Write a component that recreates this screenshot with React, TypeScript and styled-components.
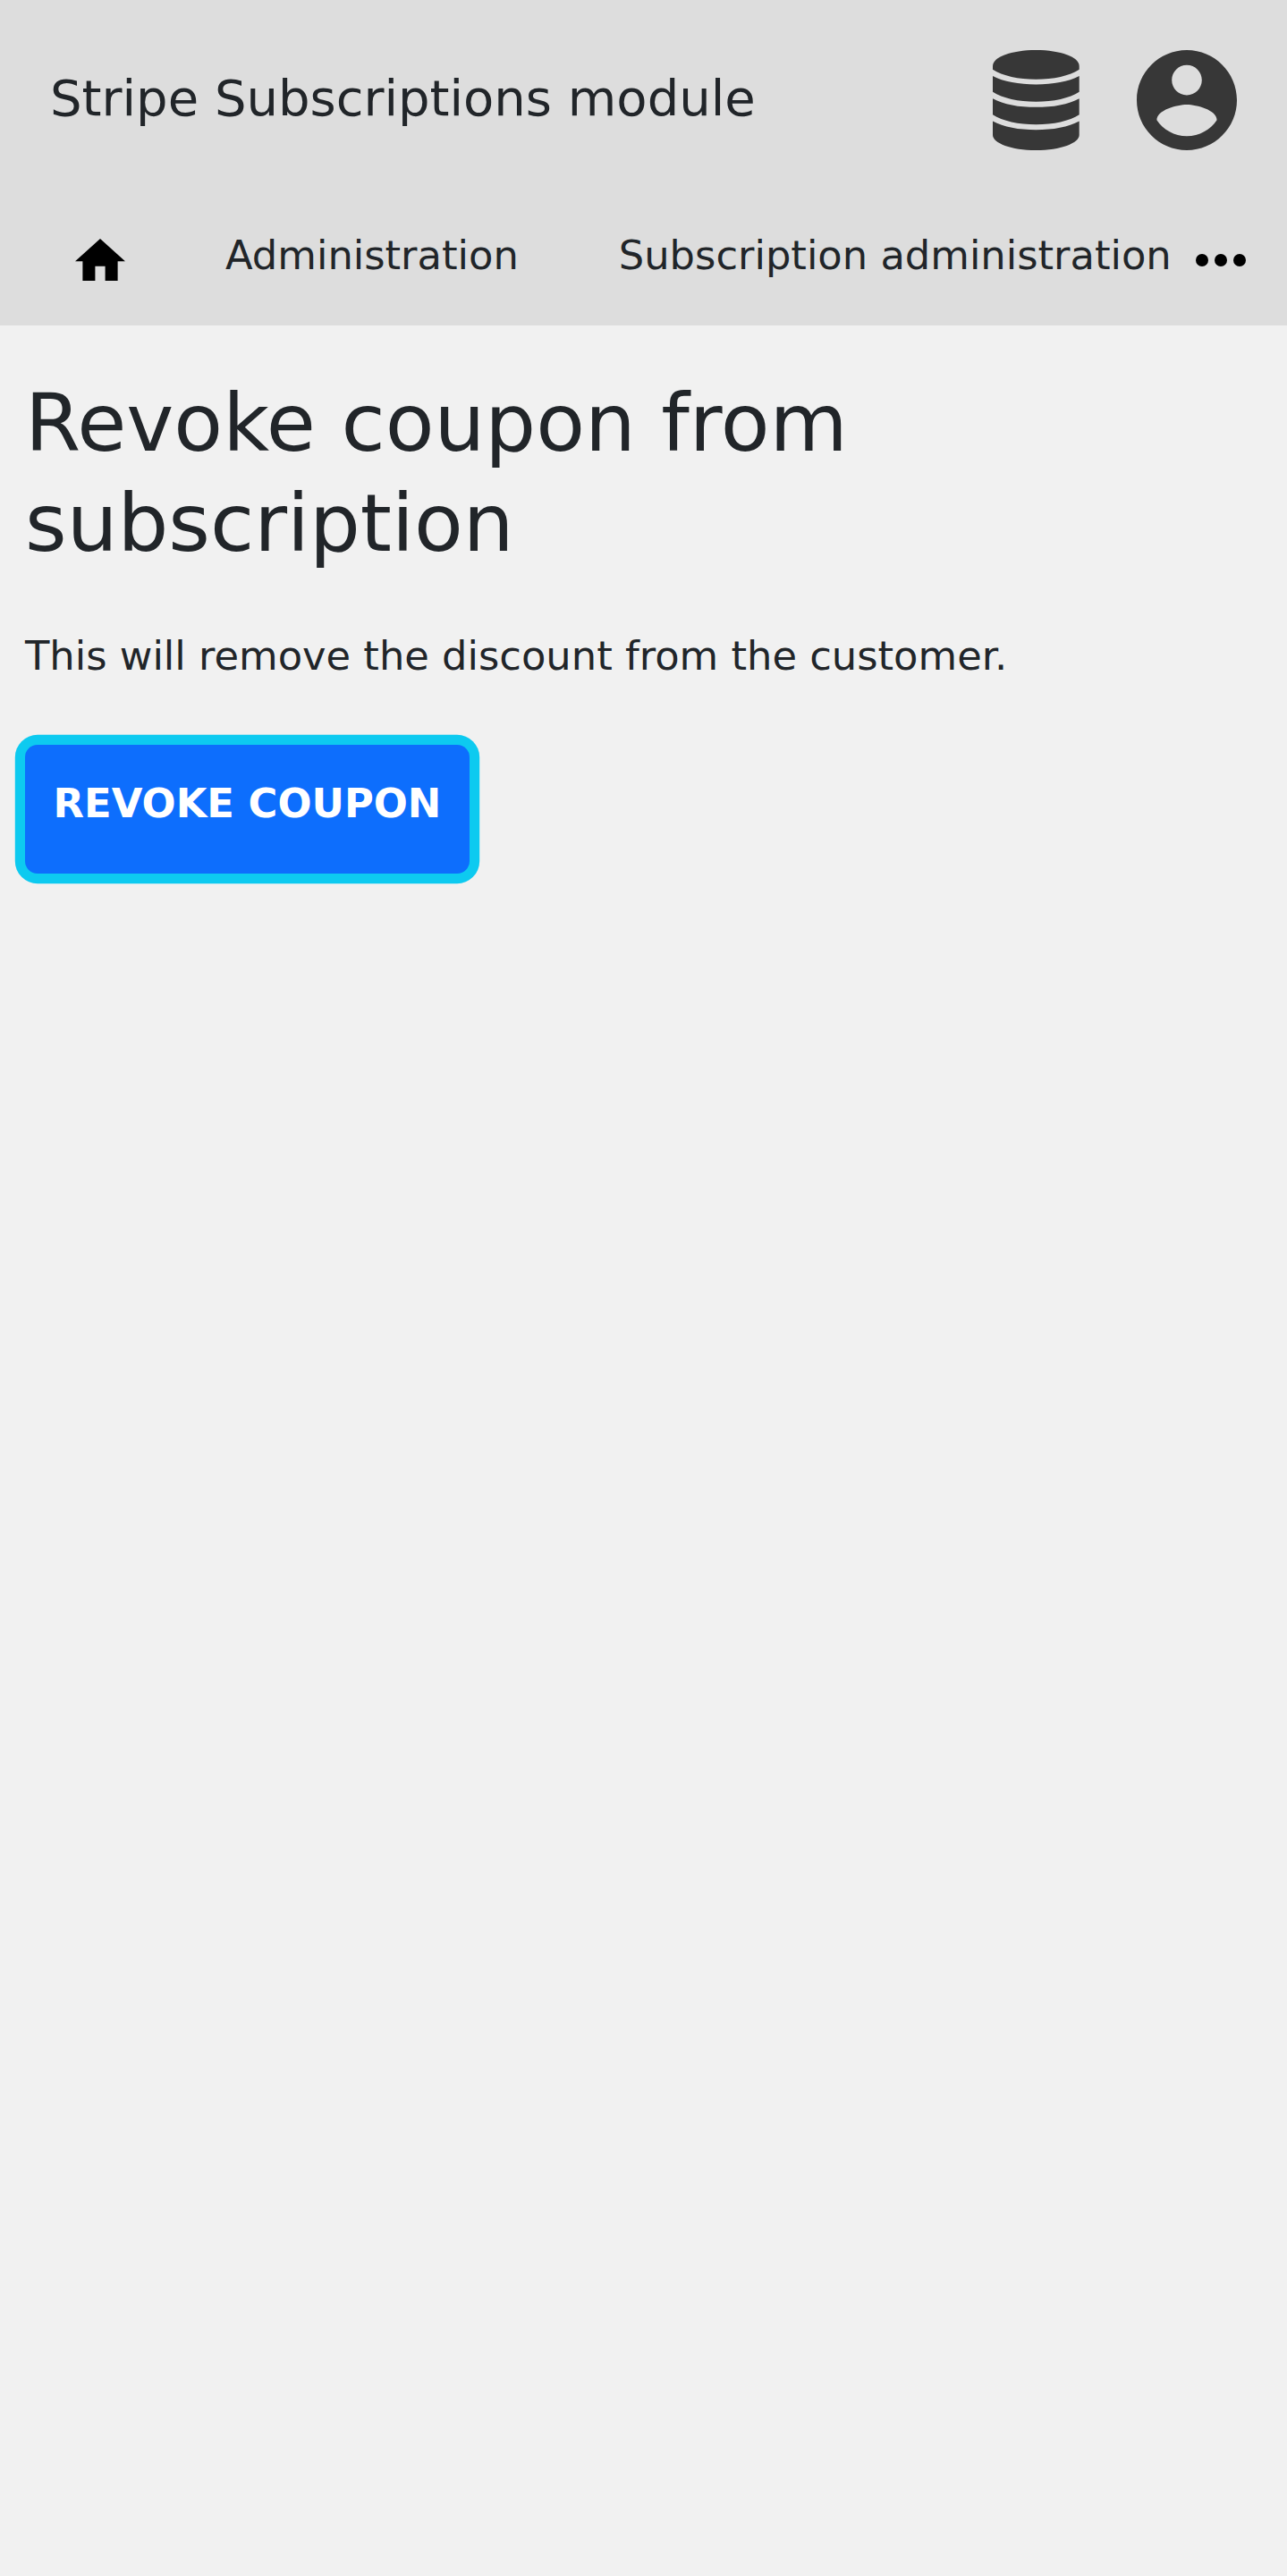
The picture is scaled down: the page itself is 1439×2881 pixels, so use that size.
import React from "react";
import styled, { createGlobalStyle } from "styled-components";

const GlobalStyle = createGlobalStyle`
  *, *::before, *::after { box-sizing: border-box; }
  body {
    margin: 0;
    background: #f1f1f1;
    color: #212529;
    font-family: "DejaVu Sans", sans-serif;
    font-size: 44.8px;
    line-height: 67.2px;
  }
`;

const Page = styled.div`
  min-height: 100vh;
  background: #f1f1f1;
`;

const Header = styled.header`
  display: flex;
  flex-direction: column;
  height: 364px;
  background: #ddd;
`;

const TitleBar = styled.div`
  display: flex;
  align-items: center;
  height: 224px;
  padding: 0 56px;
`;

const ModuleTitle = styled.div`
  flex: 1;
  padding-bottom: 4px;
  font-size: 56px;
  line-height: 84px;
`;

const HeaderIcons = styled.div`
  display: flex;
  align-items: center;
  gap: 64.3px;
`;

const Icon = styled.svg<{ $w: number; $h: number; $color?: string }>`
  display: block;
  flex: none;
  width: ${(p) => p.$w}px;
  height: ${(p) => p.$h}px;
  fill: ${(p) => p.$color ?? "#000"};
`;

const Nav = styled.nav`
  display: flex;
  align-items: center;
  height: 140px;
  padding: 0 46px 7px 84px;
`;

const NavLinks = styled.div`
  display: flex;
  flex: 1;
  align-items: center;
  gap: 112px;
`;

const NavLink = styled.a`
  padding-bottom: 10px;
  color: inherit;
  text-decoration: none;
  white-space: nowrap;
`;

const Content = styled.main`
  padding: 53px 28px 0;
`;

const Heading = styled.h1`
  margin: 0 0 59px;
  font-size: 89.6px;
  font-weight: 400;
  line-height: 112px;
`;

const Message = styled.p`
  margin: 0 0 66px;
`;

const RevokeButton = styled.button`
  display: block;
  height: 143.4px;
  padding: 32px 31.6px 44.2px;
  border: 0;
  border-radius: 14px;
  background: #0d6efd;
  box-shadow: 0 0 0 11.2px #0dcaf0;
  color: #fff;
  font: 700 44.8px/67.2px "DejaVu Sans", sans-serif;
  text-transform: uppercase;
  white-space: nowrap;
`;

const DatabaseIcon = () => (
  <Icon $w={96.7} $h={112} $color="#373737" viewBox="0 0 290 335" preserveAspectRatio="none">
    <path d="M0 53C0 24 62 0 145 0S290 24 290 53V65C258 86 203 98 145 98S32 86 0 65Z" />
    <path d="M0 87C36 106 88 115 145 115S254 106 290 87V140C258 161 203 173 145 173S32 161 0 140Z" />
    <path d="M0 162C36 182 88 191 145 191S254 182 290 162V216C258 237 203 249 145 249S32 237 0 216Z" />
    <path d="M0 238C36 258 88 267 145 267S254 258 290 238V284C290 311 228 335 145 335S0 311 0 284Z" />
  </Icon>
);

const AccountIcon = () => (
  <Icon $w={112} $h={112} $color="#373737" viewBox="2 2 20 20">
    <path d="M12 2C6.48 2 2 6.48 2 12s4.480 10 10 10 10-4.480 10-10S17.520 2 12 2zm0 3c1.660 0 3 1.340 3 3s-1.340 3-3 3-3-1.340-3-3 1.340-3 3-3zm0 14.200c-2.500 0-4.710-1.280-6-3.220.030-1.990 4-3.080 6-3.080 1.990 0 5.970 1.090 6 3.080-1.290 1.940-3.500 3.220-6 3.220z" />
  </Icon>
);

const HomeIcon = () => (
  <Icon $w={56} $h={47.6} viewBox="2 3 20 17">
    <path d="M10 20v-6h4v6h5v-8h3L12 3 2 12h3v8z" />
  </Icon>
);

const MoreIcon = () => (
  <Icon $w={56} $h={14} viewBox="0 0 56 14">
    <circle cx="7" cy="7" r="7" />
    <circle cx="28" cy="7" r="7" />
    <circle cx="49" cy="7" r="7" />
  </Icon>
);

export default function App() {
  return (
    <Page>
      <GlobalStyle />
      <Header>
        <TitleBar>
          <ModuleTitle>Stripe Subscriptions module</ModuleTitle>
          <HeaderIcons>
            <DatabaseIcon />
            <AccountIcon />
          </HeaderIcons>
        </TitleBar>
        <Nav>
          <NavLinks>
            <HomeIcon />
            <NavLink>Administration</NavLink>
            <NavLink>Subscription administration</NavLink>
          </NavLinks>
          <MoreIcon />
        </Nav>
      </Header>
      <Content>
        <Heading>
          Revoke coupon from
          <br />
          subscription
        </Heading>
        <Message>This will remove the discount from the customer.</Message>
        <RevokeButton>Revoke coupon</RevokeButton>
      </Content>
    </Page>
  );
}
